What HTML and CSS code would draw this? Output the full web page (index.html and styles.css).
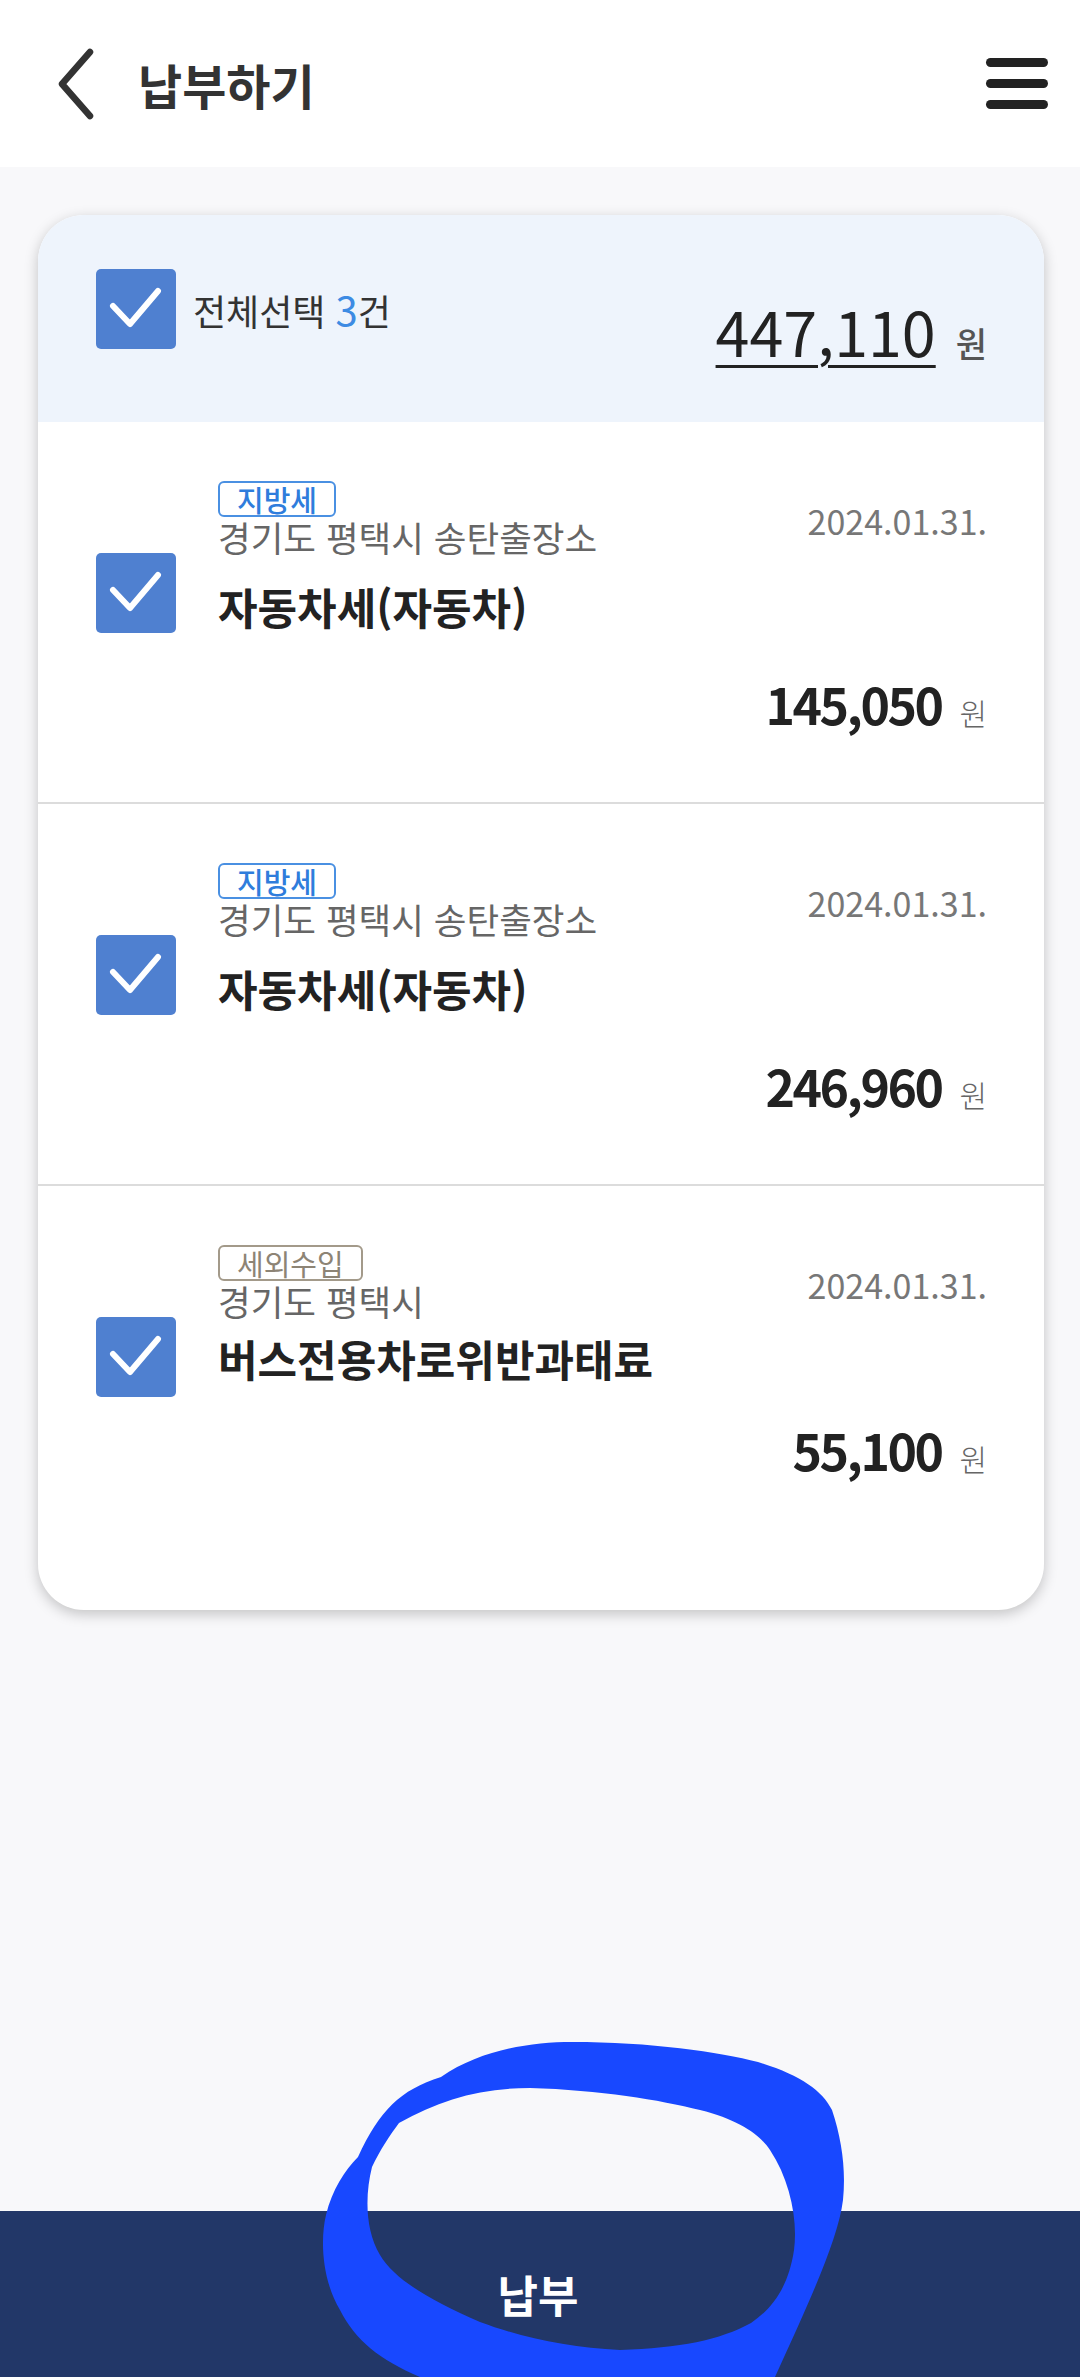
FILE: index.html
```html
<!DOCTYPE html>
<html lang="ko">
<head>
<meta charset="utf-8">
<title>납부하기</title>
<link rel="stylesheet" href="styles.css">
</head>
<body>
<div class="page">
  <header class="appbar">
    <span class="back" aria-label="뒤로">
      <svg viewBox="0 0 40 72" width="40" height="72"><path d="M34 4 L6 36 L34 68"/></svg>
    </span>
    <h1 class="title">납부하기</h1>
    <span class="menu" aria-label="메뉴"><i></i><i></i><i></i></span>
  </header>

  <main class="content">
    <section class="card">
      <div class="card-head">
        <div class="select-all">
          <span class="check"><svg viewBox="0 0 80 80"><path d="M17 37 L34 55 L62 22"/></svg></span>
          <span class="select-label">전체선택 <em>3</em>건</span>
        </div>
        <div class="total"><span class="total-num">447,110</span><span class="won won-strong">원</span></div>
      </div>

      <div class="item">
        <span class="check"><svg viewBox="0 0 80 80"><path d="M17 37 L34 55 L62 22"/></svg></span>
        <div class="item-body">
          <div class="item-top">
            <div class="item-meta">
              <span class="badge badge-local">지방세</span>
              <span class="location">경기도 평택시 송탄출장소</span>
            </div>
            <span class="date">2024.01.31.</span>
          </div>
          <div class="item-title">자동차세(자동차)</div>
          <div class="amount"><span class="amount-num">145,050</span><span class="won">원</span></div>
        </div>
      </div>

      <div class="item">
        <span class="check"><svg viewBox="0 0 80 80"><path d="M17 37 L34 55 L62 22"/></svg></span>
        <div class="item-body">
          <div class="item-top">
            <div class="item-meta">
              <span class="badge badge-local">지방세</span>
              <span class="location">경기도 평택시 송탄출장소</span>
            </div>
            <span class="date">2024.01.31.</span>
          </div>
          <div class="item-title">자동차세(자동차)</div>
          <div class="amount"><span class="amount-num">246,960</span><span class="won">원</span></div>
        </div>
      </div>

      <div class="item item-last">
        <span class="check"><svg viewBox="0 0 80 80"><path d="M17 37 L34 55 L62 22"/></svg></span>
        <div class="item-body">
          <div class="item-top">
            <div class="item-meta">
              <span class="badge badge-other">세외수입</span>
              <span class="location">경기도 평택시</span>
            </div>
            <span class="date">2024.01.31.</span>
          </div>
          <div class="item-title">버스전용차로위반과태료</div>
          <div class="amount"><span class="amount-num">55,100</span><span class="won">원</span></div>
        </div>
      </div>
    </section>
  </main>

  <footer class="paybar">
    <span class="pay-label">납부</span>
  </footer>

  <svg class="annot" viewBox="0 0 1080 2377" width="1080" height="2377" aria-hidden="true">
    <path fill-rule="evenodd" d="M358 2157 C380 2110 400 2090 441 2077 C480 2050 530 2042 572 2042 C650 2042 720 2052 758 2062 C800 2075 822 2090 832 2110 C842 2140 846 2170 843 2200 C838 2240 810 2300 775 2377 L420 2377 C380 2360 355 2340 340 2310 C322 2280 320 2240 326 2215 C332 2190 345 2170 358 2157 Z M372 2167 C380 2150 390 2135 399 2123 C440 2100 480 2088 530 2088 C600 2090 660 2100 700 2110 C740 2120 760 2135 770 2150 C790 2180 798 2220 794 2250 C788 2290 770 2310 751 2323 C720 2340 680 2348 620 2350 C570 2348 520 2337 480 2322 C430 2300 395 2280 380 2255 C365 2230 365 2195 372 2167 Z"/>
  </svg>
</div>
</body>
</html>
```

FILE: styles.css
```css
* { box-sizing: border-box; }
html, body { margin: 0; padding: 0; }
body {
  font-family: "Noto Sans CJK KR", "Noto Sans", sans-serif;
  background: #f8f8fa;
  color: #222;
}
.page {
  position: relative;
  min-height: 2377px;
  display: flex;
  flex-direction: column;
  overflow: hidden;
}

/* app bar */
.appbar {
  height: 167px;
  background: #fff;
  display: flex;
  align-items: center;
  padding: 0 32px 0 56px;
}
.back { display: flex; width: 40px; height: 72px; }
.back svg path { fill: none; stroke: #333; stroke-width: 6.5; stroke-linecap: round; stroke-linejoin: round; }
.title {
  margin: 0 0 0 42px;
  font-size: 48px;
  font-weight: 700;
  color: #333;
  line-height: 1;
  flex: 1;
}
.menu { display: flex; flex-direction: column; gap: 12px; width: 62px; }
.menu i { display: block; height: 9px; border-radius: 5px; background: #222; }

/* content */
.content {
  flex: 1;
  padding: 48px 36px 0 38px;
}
.card {
  background: #fff;
  border-radius: 46px;
  overflow: hidden;
  box-shadow: 0 4px 14px rgba(0,0,0,0.22);
}
.card-head {
  height: 207px;
  background: #eef4fc;
  display: flex;
  justify-content: space-between;
  align-items: flex-start;
  padding: 54px 57px 0 58px;
}
.select-all { display: flex; align-items: flex-start; }
.check {
  flex: none;
  width: 80px;
  height: 80px;
  border-radius: 5px;
  background: #4f80d0;
  display: block;
}
.check svg { display: block; width: 80px; height: 80px; }
.check svg path { fill: none; stroke: #fff; stroke-width: 6; stroke-linecap: round; stroke-linejoin: round; }
.select-label {
  margin: 16px 0 0 17px;
  font-size: 36px;
  line-height: 48px;
  font-weight: 400;
  color: #333;
}
.select-label em { font-style: normal; color: #3d8be3; font-size: 40px; }
.total { display: flex; align-items: baseline; margin-top: 26px; }
.total-num {
  font-size: 61px;
  line-height: 72px;
  font-weight: 400;
  color: #222;
  text-decoration: underline;
  text-decoration-thickness: 3px;
  text-underline-offset: 8px;
}
.won { font-size: 30px; font-weight: 300; color: #666; margin-left: 18px; }
.won-strong { font-size: 34px; font-weight: 500; color: #555; margin-left: 20px; }

/* items */
.item {
  display: flex;
  align-items: flex-start;
  height: 382px;
  padding: 59px 57px 0 58px;
  border-bottom: 2px solid #dcdcdc;
}
.item > .check { margin-top: 72px; }
.item-last { height: 424px; border-bottom: none; }
.item-body { flex: 1; margin-left: 42px; }
.item-top { display: flex; justify-content: space-between; align-items: flex-start; }
.item-meta { display: flex; flex-direction: column; align-items: flex-start; }
.badge {
  height: 36px;
  border: 2px solid;
  border-radius: 6px;
  padding: 0 17px;
  font-size: 29px;
  line-height: 32px;
  font-weight: 500;
}
.badge-local { border-color: #4a90e2; color: #2f7ddc; }
.badge-other { border-color: #a39a8a; color: #8d8475; font-weight: 400; }
.location {
  font-size: 35.5px;
  line-height: 40px;
  color: #666;
}
.date {
  margin-top: 20px;
  font-size: 34px;
  line-height: 40px;
  color: #777;
}
.item-title {
  margin-top: 24px;
  font-size: 43px;
  line-height: 50px;
  font-weight: 700;
  color: #222;
}
.item-last .item-title { margin-top: 12px; }
.amount {
  margin-top: 40px;
  display: flex;
  justify-content: flex-end;
  align-items: baseline;
}
.item-last .amount { margin-top: 34px; }
.amount-num {
  font-size: 50px;
  line-height: 64px;
  font-weight: 700;
  color: #222;
  letter-spacing: -2.5px;
}

/* pay bar */
.paybar {
  height: 166px;
  background: #223768;
  display: flex;
  align-items: center;
  justify-content: center;
}
.pay-label {
  color: #fff;
  font-size: 44px;
  font-weight: 700;
  line-height: 1;
  margin-left: -4px;
}

/* hand-drawn annotation over the page */
.annot {
  position: absolute;
  left: 0;
  top: 0;
  pointer-events: none;
}
.annot path { fill: #1848ff; }
```
